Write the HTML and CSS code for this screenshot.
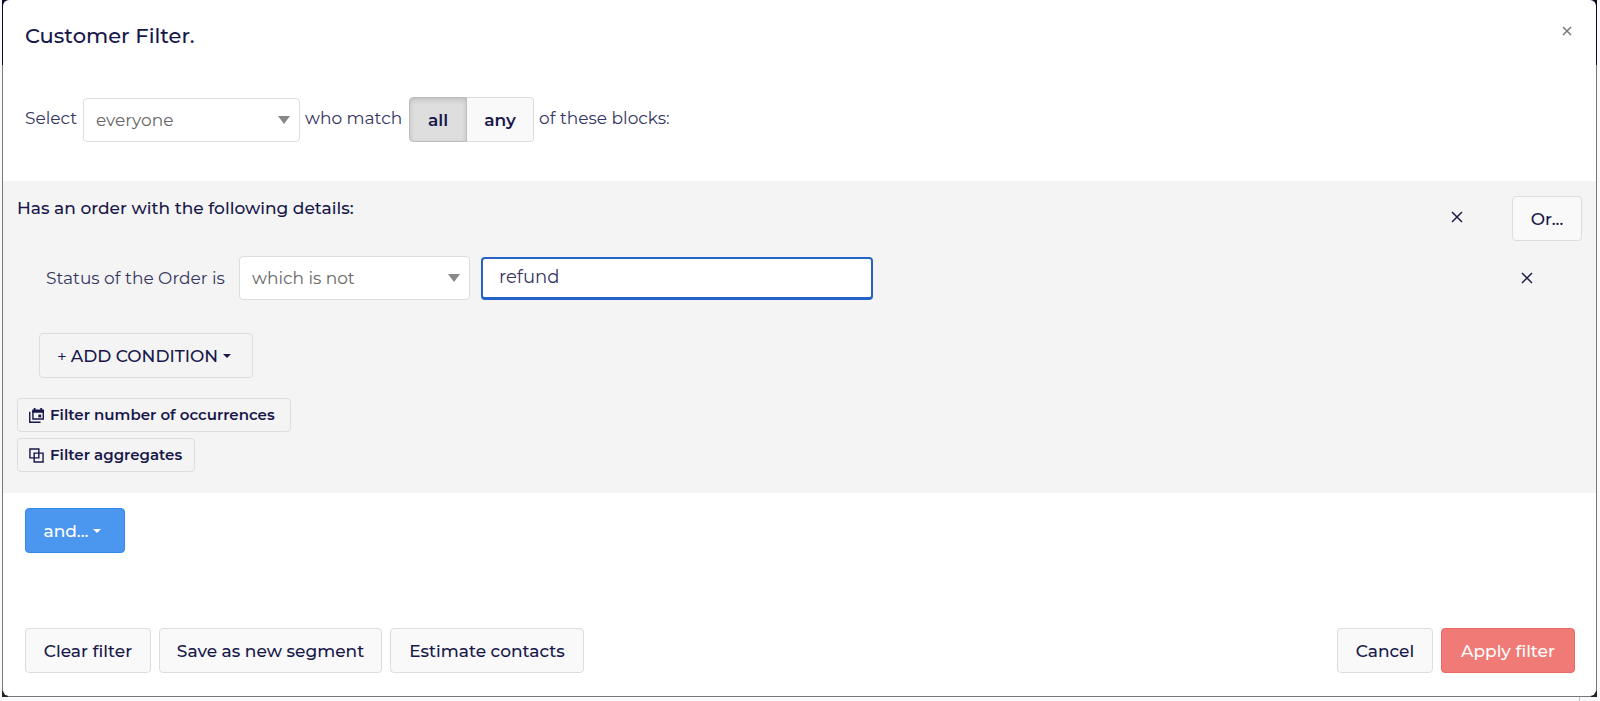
FILE: index.html
```html
<!DOCTYPE html>
<html lang="en">
<head>
<meta charset="utf-8">
<meta name="viewport" content="width=device-width, initial-scale=1">
<title>Customer Filter</title>
<link rel="stylesheet" href="styles.css">
</head>
<body>
<div class="backdrop">
  <main class="modal">
    <header class="modal-header">
      <h1 class="modal-title">Customer Filter.</h1>
      <button class="close close-muted" type="button" aria-label="Close">
        <svg class="cross" viewBox="0 0 12 12"><path d="M2 2l8 8M10 2l-8 8"/></svg>
      </button>
    </header>

    <div class="match-row">
      <label class="match-text match-label" for="who">Select</label>
      <select class="select select-who" id="who"><option>everyone</option></select>
      <span class="match-text match-who">who match</span>
      <div class="toggle" role="group" aria-label="Match mode">
        <button class="btn toggle-all" type="button" aria-pressed="true">all</button>
        <button class="btn toggle-any" type="button" aria-pressed="false">any</button>
      </div>
      <span class="match-text">of these blocks:</span>
    </div>

    <section class="block">
      <div class="block-header">
        <h2 class="block-title">Has an order with the following details:</h2>
        <div class="block-actions">
          <button class="close" type="button" aria-label="Remove block">
            <svg class="cross" viewBox="0 0 12 12"><path d="M1 1l10 10M11 1l-10 10"/></svg>
          </button>
          <button class="btn btn-or" type="button">Or...</button>
        </div>
      </div>

      <div class="condition">
        <label class="condition-label" for="operator">Status of the Order is</label>
        <select class="select select-operator" id="operator"><option>which is not</option></select>
        <input class="value" type="text" value="refund" aria-label="Order status">
        <button class="close condition-close" type="button" aria-label="Remove condition">
          <svg class="cross" viewBox="0 0 12 12"><path d="M1 1l10 10M11 1l-10 10"/></svg>
        </button>
      </div>

      <button class="btn btn-clear btn-add" type="button"><span class="plus">+</span>ADD CONDITION<span class="caret"></span></button>

      <div class="extras">
        <button class="btn btn-clear btn-small btn-occurrences" type="button">
          <svg class="icon" viewBox="0 0 16 16"><path class="fill" d="M3.500 1.500H5V0h2v1.500h5V0h2v1.500h2V5H3.500z"/><path d="M4.200 3v8.800h11V3M.8 4v11.200h11.500"/><path class="fill" d="M10 7h3v3h-3z"/></svg>
          Filter number of occurrences
        </button>
        <button class="btn btn-clear btn-small btn-aggregates" type="button">
          <svg class="icon" viewBox="0 0 16 16"><path d="M1 1h9.500v9.500H1zM5.500 5.500H15V15H5.500z"/></svg>
          Filter aggregates
        </button>
      </div>
    </section>

    <div class="and-row">
      <button class="btn btn-primary" type="button">and...<span class="caret"></span></button>
    </div>

    <footer class="modal-footer">
      <div class="footer-group">
        <button class="btn btn-reset" type="button">Clear filter</button>
        <button class="btn btn-save" type="button">Save as new segment</button>
        <button class="btn btn-estimate" type="button">Estimate contacts</button>
      </div>
      <div class="footer-group">
        <button class="btn btn-cancel" type="button">Cancel</button>
        <button class="btn btn-apply" type="button">Apply filter</button>
      </div>
    </footer>
  </main>
</div>
<div class="page-edge"></div>
</body>
</html>
```
FILE: styles.css
```css
* { box-sizing: border-box; }

body {
  margin: 0;
  background: #fafafc;
  color: #34345f;
  font: 17px/24px Montserrat, Inter, sans-serif;
}

button, input, select { font: inherit; color: inherit; }

.backdrop {
  margin: 0 3px 0 2px;
  padding: 0 1px 1px;
  background:
    linear-gradient(#222, #222) left bottom / 6px 6px no-repeat,
    linear-gradient(#222, #222) right bottom / 6px 6px no-repeat,
    linear-gradient(#0c0a2a 65px, #777 65px);
}

.modal {
  border-radius: 6px;
  background: #fff;
}

.modal-header {
  display: flex;
  align-items: flex-start;
  justify-content: space-between;
  padding: 20px 18px 0 22px;
}

.modal-title {
  margin: 0;
  color: #17174a;
  font-size: 21px;
  line-height: 32px;
  font-weight: 500;
}

.close {
  display: flex;
  padding: 5px;
  border: 0;
  background: none;
  color: #1c1c4c;
}

.close-muted { color: #777; }

.cross {
  width: 12px;
  height: 12px;
  fill: none;
  stroke: currentColor;
  stroke-width: 1.5;
}

.match-row {
  display: flex;
  align-items: center;
  gap: 5px;
  padding: 45px 22px 39px;
}

.match-text { padding-bottom: 3px; }
.match-label { width: 53px; }
.match-who { width: 99px; }

.select {
  height: 44px;
  padding: 0 32px 0 12px;
  border: 1px solid #ddd;
  border-radius: 4px;
  appearance: none;
  background: #fff url("data:image/svg+xml,%3Csvg xmlns='http://www.w3.org/2000/svg' viewBox='0 0 12 8'%3E%3Cpath d='M0 0h12L6 8z' fill='%23888'/%3E%3C/svg%3E") right 9px center / 12px 8px no-repeat;
  color: #666;
}

.select-who { width: 217px; }

.toggle { display: flex; }

.btn {
  display: flex;
  align-items: center;
  justify-content: center;
  height: 45px;
  padding: 0;
  border: 1px solid #ddd;
  border-radius: 4px;
  background: #f9f9f9;
  color: #17174a;
  font-weight: 500;
  white-space: nowrap;
}

.toggle-all {
  width: 58px;
  border-color: #bebebe;
  border-radius: 4px 0 0 4px;
  background: #dedede;
  box-shadow: inset 0 2px 5px rgba(0, 0, 0, 0.15);
  font-weight: 600;
}

.toggle-any {
  width: 67px;
  border-left: 0;
  border-radius: 0 4px 4px 0;
  font-weight: 600;
}

.block {
  padding: 15px 14px 21px;
  background: #f4f4f4;
}

.block-header {
  display: flex;
  align-items: flex-start;
  justify-content: space-between;
}

.block-title {
  margin: 0;
  color: #17174a;
  font-size: 17px;
  line-height: 24px;
  font-weight: 500;
}

.block-actions {
  display: flex;
  align-items: flex-start;
  gap: 44px;
}

.block-actions .close { padding-top: 15px; }

.btn-or { width: 70px; }

.condition {
  display: flex;
  align-items: center;
  padding: 15px 44px 0 29px;
}

.condition-label { width: 193px; }

.select-operator {
  width: 231px;
  margin-right: 11px;
}

.value {
  width: 392px;
  height: 43px;
  padding: 0 16px 2px;
  border: 2px solid #2562c8;
  border-bottom-width: 3px;
  border-radius: 4px;
  outline: 0;
  background: #fff;
  font-size: 18px;
}

.condition-close { margin-left: auto; }

.btn-clear { background: #f4f4f4; }

.btn-add {
  width: 214px;
  margin: 33px 0 20px 22px;
  padding-right: 4px;
}

.plus {
  margin-right: 4px;
  font-weight: 400;
}

.caret {
  margin-left: 5px;
  border: 4px solid transparent;
  border-top-color: currentColor;
  border-bottom: 0;
}

.extras {
  display: flex;
  flex-direction: column;
  gap: 6px;
}

.btn-small {
  justify-content: flex-start;
  gap: 6px;
  height: 34px;
  padding-left: 11px;
  font-size: 15px;
  font-weight: 600;
}

.btn-occurrences { width: 274px; }
.btn-aggregates { width: 178px; }

.icon {
  width: 15px;
  height: 15px;
  fill: none;
  stroke: currentColor;
  stroke-width: 1.5;
}

.icon .fill {
  fill: currentColor;
  stroke: none;
}

.and-row { padding: 15px 22px 75px; }

.btn-primary {
  width: 100px;
  padding-right: 5px;
  border-color: #3488ee;
  background: #4b96ee;
  color: #fff;
}

.modal-footer {
  display: flex;
  flex-wrap: wrap;
  justify-content: space-between;
  padding: 0 21px 23px 22px;
}

.footer-group {
  display: flex;
  flex-wrap: wrap;
  gap: 8px;
}

.btn-reset { width: 126px; }
.btn-save { width: 223px; }
.btn-estimate { width: 194px; }
.btn-cancel { width: 96px; }

.btn-apply {
  width: 134px;
  border-color: #ee6767;
  background: #ef7a76;
  color: #fff;
}

.page-edge {
  height: 4px;
  margin-right: 20px;
  border-right: 1px solid #bbb;
}
```
